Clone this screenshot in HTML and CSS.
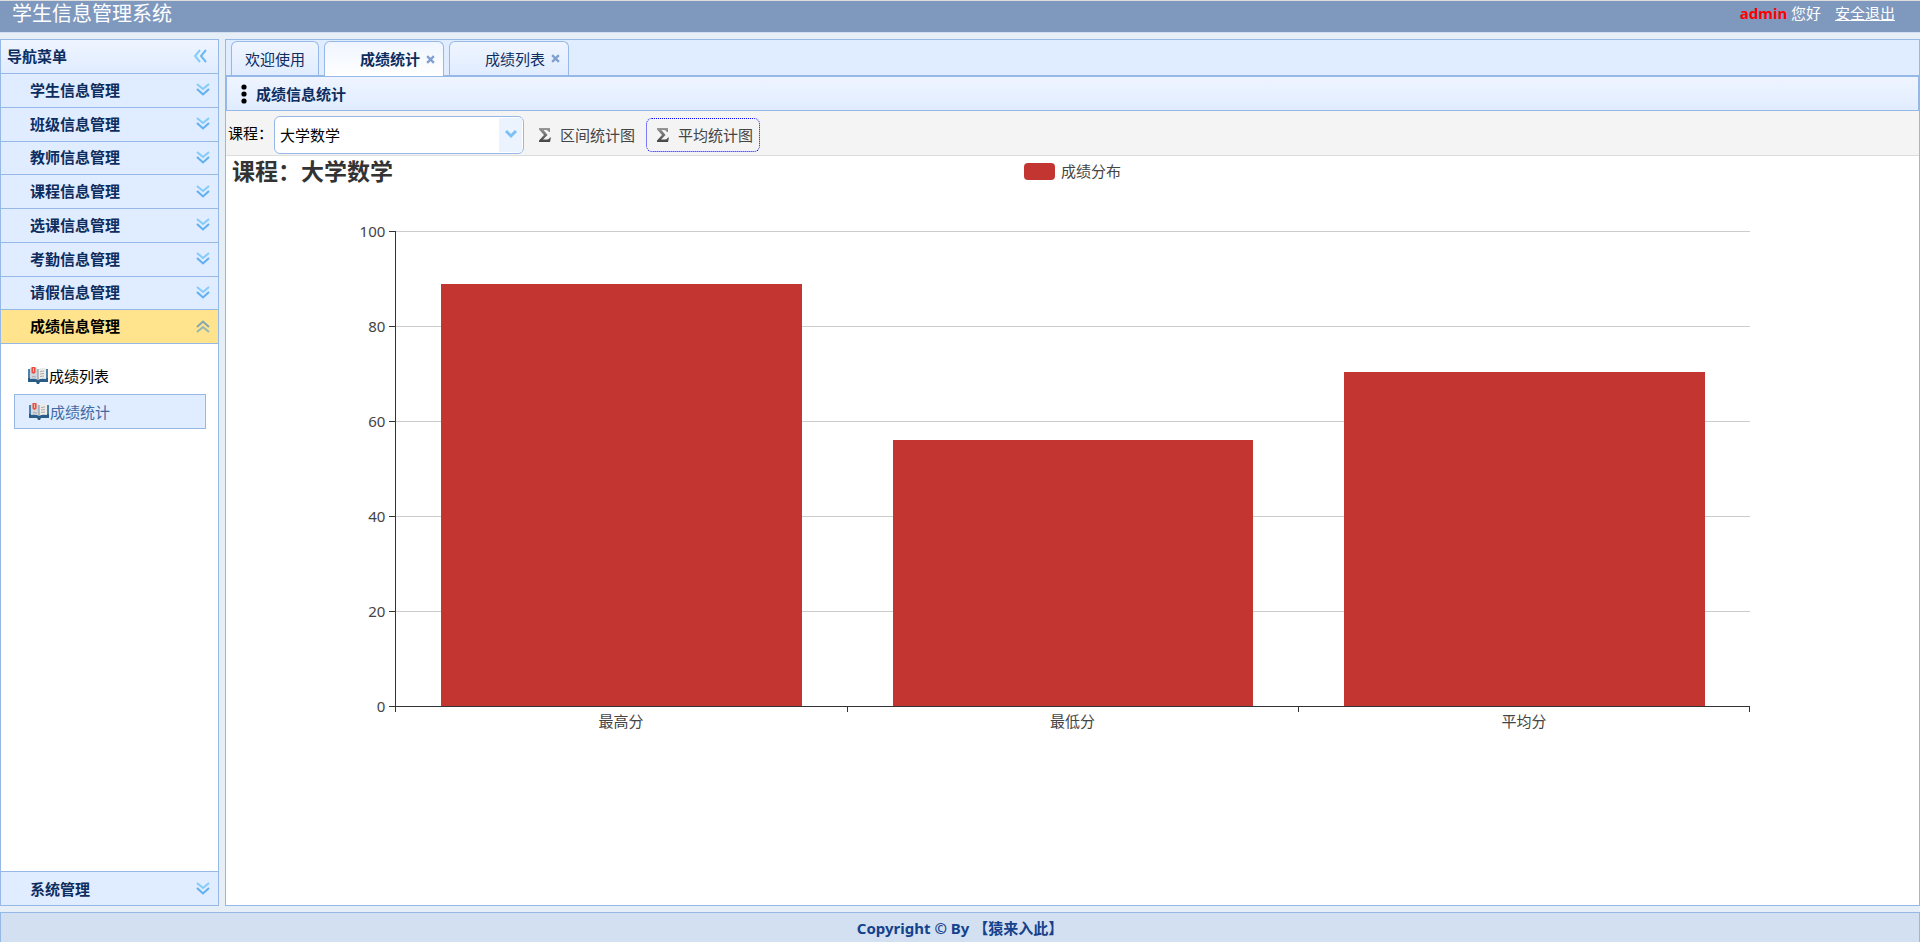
FILE: index.html
```html
<!DOCTYPE html>
<html lang="zh-CN">
<head>
<meta charset="utf-8">
<title>学生信息管理系统</title>
<link rel="stylesheet" href="styles.css">
</head>
<body>
<svg class="defs" aria-hidden="true">
  <symbol id="chev" viewBox="0 0 14 13"><path d="M1 1l6 5 6-5" stroke="#84cbf8"/><path d="M1 6l6 5.500 6-5.500" stroke="#5fb0f0"/></symbol>
  <symbol id="book" viewBox="0 0 20 17">
    <path d="M0 2h20v13h-8l-1 2H9l-1-2H0z" fill="#2a5c88"/>
    <path d="M0 2h2v9H0zM18 2h2v9h-2z" fill="#4f80a8"/>
    <path d="M2 1q5-1 8 1v11Q7 11 2 12z" fill="#cfd6de"/>
    <path d="M18 1q-5-1-8 1v11q3-2 8-1z" fill="#ecece8"/>
    <path d="M10 2v11" stroke="#7d8c9b"/>
    <path d="M12 4.500l4-.5M12 7l4-.5M12 9.500l4-.5M4 9.500l4 .5" stroke="#aaa"/>
    <path d="M3.500 0h4v5.500L5.500 7l-2-1.500z" fill="#ee4b3e"/><path d="M5.500 1v4" stroke="#ffb0a0"/>
  </symbol>
  <symbol id="sigma" viewBox="0 0 12 14"><path d="M0 0h11v4h-1Q9 2 7 2H4.500l4 5-4.500 4.500h4q2 0 3-2h1L11 14H0v-1.500l5-5.500-5-5.500z" fill="url(#metal)"/></symbol>
  <linearGradient id="metal" x2="0" y2="1"><stop stop-color="#999"/><stop offset="1" stop-color="#444"/></linearGradient>
</svg>
<header class="top">
  <h1>学生信息管理系统</h1>
  <div class="user"><b>admin</b> 您好 <a href="#">安全退出</a></div>
</header>
<div class="body">
  <aside class="side">
    <div class="side-title">导航菜单
      <button type="button" aria-label="收起"><svg width="13" height="14" viewBox="0 0 13 14"><path d="M6 1L1 7l5 6" stroke="#84cbf8"/><path d="M12 1L7 7l5 6" stroke="#6ab8f4"/></svg></button>
    </div>
    <nav class="groups">
      <button type="button" class="group">学生信息管理<svg><use href="#chev"/></svg></button>
      <button type="button" class="group">班级信息管理<svg><use href="#chev"/></svg></button>
      <button type="button" class="group">教师信息管理<svg><use href="#chev"/></svg></button>
      <button type="button" class="group">课程信息管理<svg><use href="#chev"/></svg></button>
      <button type="button" class="group">选课信息管理<svg><use href="#chev"/></svg></button>
      <button type="button" class="group">考勤信息管理<svg><use href="#chev"/></svg></button>
      <button type="button" class="group">请假信息管理<svg><use href="#chev"/></svg></button>
      <button type="button" class="group open">成绩信息管理<svg><use href="#chev"/></svg></button>
    </nav>
    <div class="links">
      <a href="#"><svg><use href="#book"/></svg>成绩列表</a>
      <a href="#" class="current"><svg><use href="#book"/></svg>成绩统计</a>
    </div>
    <button type="button" class="group last">系统管理<svg><use href="#chev"/></svg></button>
  </aside>
  <main class="main">
    <div class="tabs">
      <div class="tab"><a href="#">欢迎使用</a></div>
      <div class="tab closable active"><a href="#">成绩统计</a><button type="button" aria-label="关闭成绩统计"><svg viewBox="0 0 8 8"><path d="M1 1l6 6M7 1L1 7"/></svg></button></div>
      <div class="tab closable"><a href="#">成绩列表</a><button type="button" aria-label="关闭成绩列表"><svg viewBox="0 0 8 8"><path d="M1 1l6 6M7 1L1 7"/></svg></button></div>
    </div>
    <h2 class="panel-title"><svg width="6" height="20" viewBox="0 0 6 20"><circle cx="3" cy="3" r="2.600"/><circle cx="3" cy="10" r="2.600"/><circle cx="3" cy="17" r="2.600"/></svg>成绩信息统计</h2>
    <div class="tools">
      <label for="course">课程：</label>
      <div class="combo">
        <select id="course"><option>大学数学</option></select>
        <span class="arrow"><svg width="14" height="9" viewBox="0 0 14 9"><path d="M2 1l5 5 5-5"/></svg></span>
      </div>
      <button type="button" class="tool"><svg><use href="#sigma"/></svg>区间统计图</button>
      <button type="button" class="tool focused"><svg><use href="#sigma"/></svg>平均统计图</button>
    </div>
    <section class="chart">
      <div class="chart-head">
        <h3>课程：大学数学</h3>
        <div class="legend"><i></i>成绩分布</div>
      </div>
      <div class="plot">
        <div class="yaxis"><span>100</span><span>80</span><span>60</span><span>40</span><span>20</span><span>0</span></div>
        <div class="lines"><i></i><i></i><i></i><i></i><i></i></div>
        <div class="bars">
          <div class="bar" style="height:88.8%"></div>
          <div class="bar" style="height:56%"></div>
          <div class="bar" style="height:70.4%"></div>
        </div>
        <div class="xaxis"><span>最高分</span><span>最低分</span><span>平均分</span></div>
      </div>
    </section>
  </main>
</div>
<footer class="foot">Copyright © By 【猿来入此】</footer>
</body>
</html>
```
FILE: styles.css
```css
* { box-sizing: border-box; }
body {
  margin: 0;
  height: 100vh;
  display: flex;
  flex-direction: column;
  background: #e6eef8;
  font: 15px/20px "Noto Sans", "Noto Sans CJK SC", sans-serif;
  color: #000;
}
h1, h2, h3 { margin: 0; }
a { color: inherit; text-decoration: none; }
button { font: inherit; color: inherit; border: 0; background: none; padding: 0; margin: 0; }
svg { fill: none; flex: none; }
.defs { position: absolute; width: 0; height: 0; }

.top {
  height: 33px;
  display: flex;
  justify-content: space-between;
  align-items: flex-start;
  padding: 0 25px 0 12px;
  background: #7f99be;
  border-top: 1px solid #ddd;
  border-bottom: 1px solid #d3dff0;
  color: #fff;
}
.top h1 { font-size: 20px; line-height: 26px; font-weight: 400; }
.user { line-height: 24px; }
.user b { color: #f00; }
.user a { text-decoration: underline; margin-left: 10px; }

.body { flex: 1; min-height: 0; display: flex; gap: 6px; padding: 6px 0; }
.side {
  width: 219px;
  display: flex;
  flex-direction: column;
  border: 1px solid #95b8e7;
  background: #fff;
}
.side-title {
  height: 34px;
  display: flex;
  justify-content: space-between;
  align-items: center;
  padding: 0 11px 2px 6px;
  border-bottom: 1px solid #95b8e7;
  background: linear-gradient(#eff5ff, #e0ecff);
  color: #0e2d5f;
  font-weight: 700;
}
.side-title svg { display: block; stroke-width: 2; }
.groups { height: 270px; display: grid; grid-template-rows: repeat(8, 1fr); }
.group {
  display: flex;
  justify-content: space-between;
  align-items: center;
  padding: 0 8px 1px 29px;
  border-bottom: 1px solid #95b8e7;
  background: #e0ecff;
  color: #0e2d5f;
  font-weight: 700;
}
.group svg { width: 14px; height: 13px; stroke-width: 2; }
.group.open { background: #ffe48d; color: #000; }
.group.open svg { transform: rotate(180deg); opacity: .7; }
.group.open use { filter: brightness(.8); }
.group.last { height: 34px; padding-bottom: 0; border-bottom: 0; border-top: 1px solid #95b8e7; }
.links { flex: 1; padding: 14px 12px 0 13px; }
.links a {
  height: 35px;
  display: flex;
  align-items: center;
  gap: 1px;
  padding-left: 14px;
}
.links a + a { margin-top: 1px; }
.links a svg { width: 20px; height: 17px; }
.links .current { border: 1px solid #95b8e7; background: #e0ecff; color: #416aa3; }

.main {
  flex: 1;
  min-width: 0;
  border: 1px solid #95b8e7;
  background: #fff;
}
.tabs {
  height: 36px;
  display: flex;
  align-items: flex-end;
  gap: 5px;
  padding: 0 5px;
  border-bottom: 1px solid #95b8e7;
  background: #e0ecff;
}
.tab {
  height: 34px;
  display: flex;
  align-items: center;
  padding: 0 13px;
  border: 1px solid #95b8e7;
  border-bottom: 0;
  border-radius: 6px 6px 0 0;
  background: linear-gradient(#eff5ff, #e0ecff);
  color: #0e2d5f;
}
.closable { padding: 0 8px 0 35px; gap: 6px; }
.tab svg { display: block; width: 9px; height: 9px; stroke: #7f9fce; stroke-width: 2; }
.tab.active { margin-bottom: -1px; height: 35px; background: linear-gradient(#eff5ff, #fff); font-weight: 700; }
.panel-title {
  height: 35px;
  display: flex;
  align-items: center;
  gap: 9px;
  padding-left: 14px;
  border: 1px solid #95b8e7;
  background: linear-gradient(#eff5ff, #e0ecff);
  color: #0e2d5f;
  font-size: 15px;
}
.panel-title svg { fill: #000; }
.tools {
  height: 45px;
  display: flex;
  align-items: center;
  padding: 3px 0 0 2px;
  border-bottom: 1px solid #ddd;
  background: #f4f4f4;
}
.tools label { width: 46px; padding-bottom: 3px; white-space: nowrap; }
.combo {
  width: 250px;
  height: 38px;
  display: grid;
  grid-template-columns: 1fr 23px;
  padding: 1px;
  border: 1px solid #95b8e7;
  border-radius: 6px;
  background: #fff;
}
.combo select {
  grid-area: 1 / 1 / 2 / 3;
  appearance: none;
  border: 0;
  padding: 0 4px;
  background: none;
  font: inherit;
  color: #000;
}
.arrow { grid-area: 1 / 2; display: grid; place-items: center; background: #ebf3ff; pointer-events: none; }
.arrow svg { stroke: #7cc0f5; stroke-width: 3; }
.tool {
  height: 34px;
  display: flex;
  align-items: center;
  gap: 9px;
  padding: 0 6px 0 10px;
  border: 1px solid transparent;
  border-radius: 6px;
  color: #444;
  margin-left: 4px;
}
.tool svg { width: 12px; height: 14px; }
.tool.focused { border: 1px dotted #00f; }

.chart-head {
  display: grid;
  grid-template-columns: 1fr auto 1fr;
  height: 28px;
  padding-left: 6px;
}
.chart h3 { font-size: 23px; line-height: 30px; color: #333; }
.legend { display: flex; gap: 6px; align-items: center; margin-right: 6px; line-height: 18px; color: #444; }
.legend i { width: 31px; height: 17px; border-radius: 4px; background: #c23531; }
.plot {
  display: grid;
  grid-template-columns: 10% 1fr 10%;
  grid-template-rows: 475px auto;
  margin-top: 47px;
  color: #444;
}
.yaxis {
  grid-area: 1 / 1;
  display: flex;
  flex-direction: column;
  justify-content: space-between;
  margin: -10px 0;
}
.yaxis span { height: 20px; display: flex; align-items: center; justify-content: flex-end; gap: 4px; }
.yaxis span::after { content: ""; width: 6px; height: 1px; background: #333; }
.lines { grid-area: 1 / 2; display: grid; grid-template-rows: repeat(5, 1fr); }
.lines i { border-top: 1px solid #ccc; }
.bars {
  grid-area: 1 / 2;
  display: grid;
  grid-template-columns: repeat(3, 1fr);
  align-items: end;
  border-left: 1px solid #333;
}
.bar { margin: 0 10%; background: #c23531; }
.xaxis {
  grid-area: 2 / 2;
  display: grid;
  grid-template-columns: repeat(3, 1fr);
  border-top: 1px solid #333;
  text-align: center;
}
.xaxis span {
  padding-top: 4px;
  background: linear-gradient(#333, #333) 0 0 / 1px 5px no-repeat;
}
.xaxis span:last-child {
  background: linear-gradient(#333, #333) 0 0 / 1px 5px no-repeat, linear-gradient(#333, #333) 100% 0 / 1px 5px no-repeat;
}

.foot {
  height: 30px;
  padding-top: 5px;
  border: 1px solid #95b8e7;
  border-bottom: 0;
  background: #d2e0f2;
  color: #15428b;
  font-weight: 700;
  text-align: center;
}
```
